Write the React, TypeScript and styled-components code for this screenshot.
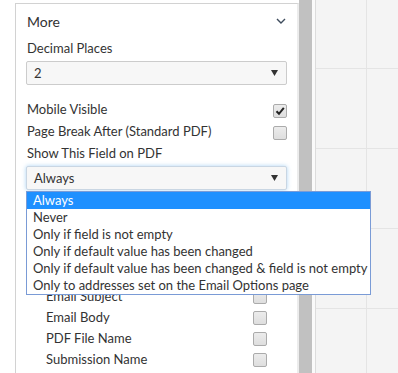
import React from "react";
import styled, { createGlobalStyle } from "styled-components";

const GlobalStyle = createGlobalStyle`
  html, body {
    margin: 0;
    padding: 0;
    background: #fff;
  }
  body {
    font-family: Lato, "Open Sans", "Liberation Sans", sans-serif;
    color: #333;
  }
`;

const SHOW_OPTIONS = [
  "Always",
  "Never",
  "Only if field is not empty",
  "Only if default value has been changed",
  "Only if default value has been changed & field is not empty",
  "Only to addresses set on the Email Options page",
];

// rows above these sit under the open dropdown
const USE_IN_FIELDS = ["Email Subject", "Email Body", "PDF File Name", "Submission Name"];

const Checkbox = ({ checked }: { checked?: boolean }) => (
  <CheckboxBox>
    {checked && (
      <svg width="10" height="10" viewBox="0 0 10 10">
        <path d="M1.5 5.2 L4 7.8 L8.8 1.8" fill="none" stroke="#222" strokeWidth="2" />
      </svg>
    )}
  </CheckboxBox>
);

const SelectArrow = () => (
  <svg width="7" height="6" viewBox="0 0 7 6">
    <path d="M0 0 H7 L3.5 6 Z" fill="#333" />
  </svg>
);

const App = () => {
  return (
    <>
      <GlobalStyle />
      <Page>
        <Panel>
          <SectionHeader>
            <SectionTitle>More</SectionTitle>
            <svg width="10" height="7" viewBox="0 0 10 7">
              <polyline points="1,1 5,5 9,1" fill="none" stroke="#3d4b5c" strokeWidth="1.4" />
            </svg>
          </SectionHeader>

          <FieldLabel>Decimal Places</FieldLabel>
          <SelectBox>
            <span>2</span>
            <SelectArrow />
          </SelectBox>

          <CheckList>
            <CheckRow>
              <span>Mobile Visible</span>
              <Checkbox checked />
            </CheckRow>
            <CheckRow>
              <span>Page Break After (Standard PDF)</span>
              <Checkbox />
            </CheckRow>
          </CheckList>

          <FieldLabel $tall>Show This Field on PDF</FieldLabel>
          <SelectWrapper>
            <SelectBox $focused>
              <span>Always</span>
              <SelectArrow />
            </SelectBox>
            <OptionList>
              {SHOW_OPTIONS.map((option, i) => (
                <OptionItem key={option} $selected={i === 0}>
                  {option}
                </OptionItem>
              ))}
            </OptionList>
          </SelectWrapper>

          <NestedList>
            {USE_IN_FIELDS.map((field) => (
              <NestedRow key={field}>
                <span>{field}</span>
                <Checkbox />
              </NestedRow>
            ))}
          </NestedList>
        </Panel>
        <Scrollbar />
        <Gutter />
        <Canvas />
      </Page>
    </>
  );
};

const Page = styled.div`
  display: flex;
  height: 373px;
  overflow: hidden;
  padding-left: 15px;
  background: #fff;
`;

const Panel = styled.aside`
  width: 284px;
  flex-shrink: 0;
  box-sizing: border-box;
  margin-top: 3px;
  padding: 0 10px;
  border-left: 1px solid #d2d2d2;
  border-top: 1px solid #d2d2d2;
  border-right: 2px solid #ececec;
  font-size: 13px;
`;

const SectionHeader = styled.div`
  display: flex;
  align-items: center;
  justify-content: space-between;
  height: 34px;
  padding: 0 1px;
`;

const SectionTitle = styled.div`
  font-size: 14px;
  color: #333;
`;

const FieldLabel = styled.div<{ $tall?: boolean }>`
  line-height: ${(p) => (p.$tall ? "22px" : "20px")};
  padding-left: 1px;
`;

const SelectWrapper = styled.div`
  position: relative;
  margin-top: 2px;
`;

const SelectBox = styled.div<{ $focused?: boolean }>`
  display: flex;
  align-items: center;
  justify-content: space-between;
  box-sizing: border-box;
  height: 24px;
  margin-top: ${(p) => (p.$focused ? "0" : "3px")};
  padding: 0 8px 0 7px;
  background: #f7f7f7;
  border: 1px solid ${(p) => (p.$focused ? "#c9d6e3" : "#cccccc")};
  border-radius: 2px;
  box-shadow: ${(p) => (p.$focused ? "0 0 4px rgba(102, 175, 233, 0.55)" : "none")};
  color: #333;
`;

const OptionList = styled.ul`
  position: absolute;
  top: calc(100% + 1px);
  left: 0;
  width: 345px;
  box-sizing: border-box;
  margin: 0;
  padding: 0;
  list-style: none;
  background: #fff;
  border: 1px solid #7a9bd6;
  z-index: 2;
`;

const OptionItem = styled.li<{ $selected?: boolean }>`
  height: 17px;
  line-height: 17px;
  padding-left: 6px;
  white-space: nowrap;
  background: ${(p) => (p.$selected ? "#1e90ff" : "transparent")};
  color: ${(p) => (p.$selected ? "#fff" : "#333")};
`;

const CheckList = styled.div`
  margin-top: 13px;
`;

const CheckRow = styled.div`
  display: flex;
  align-items: center;
  justify-content: space-between;
  height: 22px;
  padding-left: 1px;
`;

const CheckboxBox = styled.span`
  display: flex;
  align-items: center;
  justify-content: center;
  width: 12px;
  height: 12px;
  margin-top: 3px;
  border: 1px solid #ababab;
  border-radius: 2px;
  background: linear-gradient(#ececec, #dedede);
`;

const NestedList = styled.div`
  margin-top: 95px;
  padding: 0 20px 0 19px;
`;

const NestedRow = styled(CheckRow)`
  height: 21px;
`;

const Scrollbar = styled.div`
  width: 13px;
  flex-shrink: 0;
  background: #c1c1c1;
`;

const Gutter = styled.div`
  width: 3px;
  flex-shrink: 0;
  background: #fafafa;
`;

const Canvas = styled.div`
  flex: 1;
  border-left: 1px solid #dcdcdc;
  background-color: #f4f4f4;
  background-image: linear-gradient(to right, #e4e4e4 1px, transparent 1px),
    linear-gradient(to bottom, #e4e4e4 1px, transparent 1px);
  background-size: 80px 80px;
  background-position: 50px 68px;
`;

export default App;
